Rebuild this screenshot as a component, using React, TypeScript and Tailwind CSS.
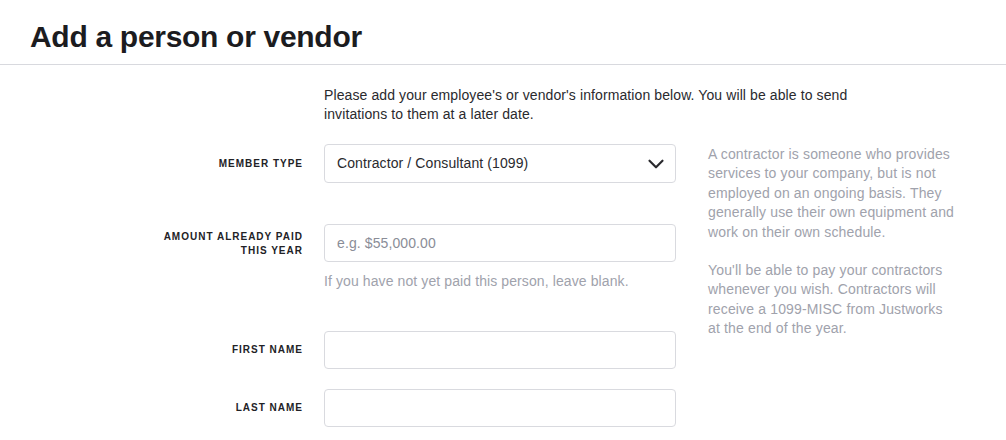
import { ChevronDown } from 'lucide-react'

const font = { fontFamily: '"Liberation Sans", Arial, sans-serif' }

function Label({ children, className = '' }: { children: React.ReactNode; className?: string }) {
  return (
    <div className={`flex items-center justify-end ${className}`}>
      <span className="max-w-[140px] text-right text-[10px] font-bold uppercase leading-[14px] tracking-[1px] text-[#222226]">
        {children}
      </span>
    </div>
  )
}

function TextInput({ placeholder }: { placeholder?: string }) {
  return (
    <input
      type="text"
      placeholder={placeholder}
      className="h-[38px] w-full rounded-[4px] border border-[#d9dadf] bg-white px-[12px] text-[14px] tracking-[0.1px] text-[#2a2a2e] placeholder:text-[#8a8d97] outline-none"
    />
  )
}

export default function App() {
  return (
    <div className="h-[440px] w-full overflow-hidden bg-white" style={font}>
      <header className="h-[65px] border-b border-[#d8d9de] pl-[30px] pt-[19px]">
        <h1 className="text-[30px] font-bold leading-[36px] tracking-[-0.3px] text-[#1c1c1f]">Add a person or vendor</h1>
      </header>

      <div className="grid grid-cols-[303px_352px_274px] gap-x-[21px] pt-[21px]">
        {/* intro */}
        <p className="col-span-2 col-start-2 mb-[20px] max-w-[540px] text-[14px] leading-[19px] tracking-[0.1px] text-[#2a2a2e]">
          Please add your employee's or vendor's information below. You will be able to send invitations to them at a later date.
        </p>

        {/* member type */}
        <Label>Member type</Label>
        <div className="flex h-[39px] items-center justify-between rounded-[4px] border border-[#d9dadf] bg-white pl-[12px] pr-[6px] text-[14px] tracking-[0.1px] text-[#2a2a2e]">
          <span>Contractor / Consultant (1099)</span>
          <ChevronDown className="h-[26px] w-[26px] text-[#2a2a2e]" strokeWidth={2} />
        </div>
        <aside className="row-span-5 ml-[11px] w-[262px] text-[14px] leading-[19.4px] tracking-[0.15px] text-[#a0a2ac]">
          <p className="pt-[1px]">
            A contractor is someone who provides services to your company, but is not employed on an ongoing basis. They generally use their own equipment and work on their own schedule.
          </p>
          <p className="mt-[19px]">
            You'll be able to pay your contractors whenever you wish. Contractors will receive a 1099-MISC from Justworks
            <br />
            at the end of the year.
          </p>
        </aside>

        {/* amount */}
        <Label className="mt-[43px]">Amount already paid this year</Label>
        <div className="mt-[41px]">
          <TextInput placeholder="e.g. $55,000.00" />
        </div>
        <p className="col-start-2 mt-[10px] text-[14px] leading-[19px] tracking-[0.1px] text-[#a0a2ac]">
          If you have not yet paid this person, leave blank.
        </p>

        {/* first name */}
        <Label className="col-start-1 mt-[40px]">First name</Label>
        <div className="mt-[40px]">
          <TextInput />
        </div>

        {/* last name */}
        <Label className="col-start-1 mt-[20px]">Last name</Label>
        <div className="mt-[20px]">
          <TextInput />
        </div>
      </div>
    </div>
  )
}
